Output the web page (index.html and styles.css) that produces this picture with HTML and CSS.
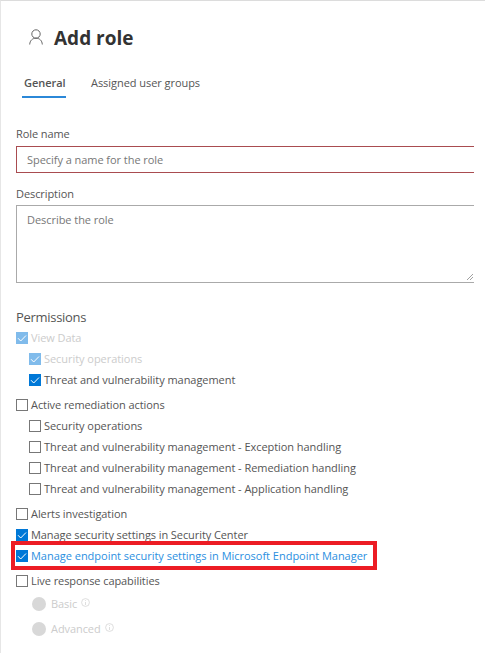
FILE: index.html
```html
<!DOCTYPE html>
<html lang="en">
<head>
<meta charset="utf-8">
<title>Add role</title>
<link rel="stylesheet" href="styles.css">
</head>
<body>
<main class="panel">
  <header class="head">
    <svg class="person" viewBox="0 0 14 16"><circle cx="7" cy="5" r="4.2"/><path d="M.7 15.5C.9 11.5 3.5 9.2 7 9.2s6.100 2.300 6.300 6.300"/></svg>
    <h1>Add role</h1>
  </header>
  <nav class="tabs"><a class="tab active">General</a><a class="tab groups">Assigned user groups</a></nav>
  <label class="label">Role name</label>
  <div class="field name">Specify a name for the role</div>
  <label class="label second">Description</label>
  <div class="field desc">Describe the role
    <svg class="grip" viewBox="0 0 8 8"><path d="M1 7 7 1M4 7 7 4"/></svg>
  </div>
  <h2>Permissions</h2>
  <div class="group">
    <div class="row off"><span class="box on"><svg viewBox="0 0 12 12"><path d="M2 6.200 4.700 9 10 3.500"/></svg></span><span>View Data</span></div>
    <div class="row sub off"><span class="box on"><svg viewBox="0 0 12 12"><path d="M2 6.200 4.700 9 10 3.500"/></svg></span><span>Security operations</span></div>
    <div class="row sub"><span class="box on"><svg viewBox="0 0 12 12"><path d="M2 6.200 4.700 9 10 3.500"/></svg></span><span>Threat and vulnerability management</span></div>
  </div>
  <div class="group">
    <div class="row"><span class="box"></span><span>Active remediation actions</span></div>
    <div class="row sub"><span class="box"></span><span>Security operations</span></div>
    <div class="row sub"><span class="box"></span><span>Threat and vulnerability management - Exception handling</span></div>
    <div class="row sub"><span class="box"></span><span>Threat and vulnerability management - Remediation handling</span></div>
    <div class="row sub"><span class="box"></span><span>Threat and vulnerability management - Application handling</span></div>
  </div>
  <div class="group">
    <div class="row"><span class="box"></span><span>Alerts investigation</span></div>
    <div class="row"><span class="box on"><svg viewBox="0 0 12 12"><path d="M2 6.200 4.700 9 10 3.500"/></svg></span><span>Manage security settings in Security Center</span></div>
    <div class="row marked"><span class="box on"><svg viewBox="0 0 12 12"><path d="M2 6.200 4.700 9 10 3.500"/></svg></span><span>Manage endpoint security settings in Microsoft Endpoint Manager</span></div>
  </div>
  <div class="group">
    <div class="row"><span class="box"></span><span>Live response capabilities</span></div>
    <div class="row radio"><span class="dot"></span><span>Basic</span><svg class="info" viewBox="0 0 9 9"><circle cx="4.500" cy="4.500" r="3.900"/><path d="M4.500 4v3M4.500 2.200v.8"/></svg></div>
    <div class="row radio"><span class="dot"></span><span>Advanced</span><svg class="info" viewBox="0 0 9 9"><circle cx="4.500" cy="4.500" r="3.900"/><path d="M4.500 4v3M4.500 2.200v.8"/></svg></div>
  </div>
</main>
</body>
</html>
```
FILE: styles.css
```css
* { box-sizing: border-box; }
body { margin: 0; background: #fff; font: 11px/21px "Open Sans", "Noto Sans", sans-serif; color: #555; }
svg { fill: none; display: block; }
.panel { height: 653px; overflow: hidden; border-left: 1px solid #e6e6e6; border-top: 1px solid #dcdcdc; padding-left: 15px; }
.head { display: flex; align-items: center; height: 30px; margin-top: 21px; padding-left: 13px; }
.person { width: 14px; height: 16px; stroke: #666; stroke-width: 1; }
h1 { margin: 1px 0 0 11px; font-size: 19px; line-height: 30px; font-weight: 700; color: #333; }
.tabs { display: flex; margin-top: 20px; padding-left: 6px; height: 26px; }
.tab { line-height: 21px; height: 26px; letter-spacing: -.05px; }
.active { width: 44px; padding-left: 2px; font-weight: 600; border-bottom: 2px solid #2b88d8; }
.groups { margin-left: 25px; }
.label { display: block; height: 21px; margin-top: 25px; letter-spacing: -.08px; }
.second { margin-top: 10px; }
.field { width: 458px; border: 1px solid #aaa; border-right: 0; padding-left: 10px; color: #777; letter-spacing: -.05px; }
.name { height: 27px; margin-top: 2px; line-height: 26px; border-color: #a94c50; }
.desc { position: relative; height: 78px; margin-top: 1px; line-height: 27px; }
.grip { position: absolute; right: 0; bottom: 1px; width: 8px; height: 8px; stroke: #888; stroke-width: .8; }
h2 { margin: 23px 0 0; font-size: 13px; line-height: 22px; font-weight: 400; letter-spacing: -.3px; }
h2 + .group { margin-top: -1px; }
.group + .group { margin-top: 4px; }
.row { display: flex; align-items: center; height: 21px; white-space: nowrap; letter-spacing: -.08px; }
.sub { padding-left: 13px; letter-spacing: -.05px; }
.box { width: 12px; height: 12px; margin-right: 3px; border: 1px solid #777; }
.on { border: 0; background: #0078d7; }
.on svg { width: 12px; height: 12px; stroke: #fff; stroke-width: 1; }
.off { color: #ccc; }
.off .box { background: #80bbeb; }
.marked { position: relative; color: #2b8fdf; letter-spacing: -.02px; }
.marked::after { content: ""; box-sizing: border-box; position: absolute; left: -5px; top: -4px; width: 366px; height: 29px; border: 4px solid #ec1c24; }
.radio { height: 25px; padding-left: 16px; color: #ccc; }
.dot { width: 14px; height: 14px; margin-right: 5px; border-radius: 50%; background: #d8d8d8; }
.info { width: 9px; height: 9px; margin-left: 4px; margin-bottom: 2px; stroke: #d0d0d0; stroke-width: .7; }
```
